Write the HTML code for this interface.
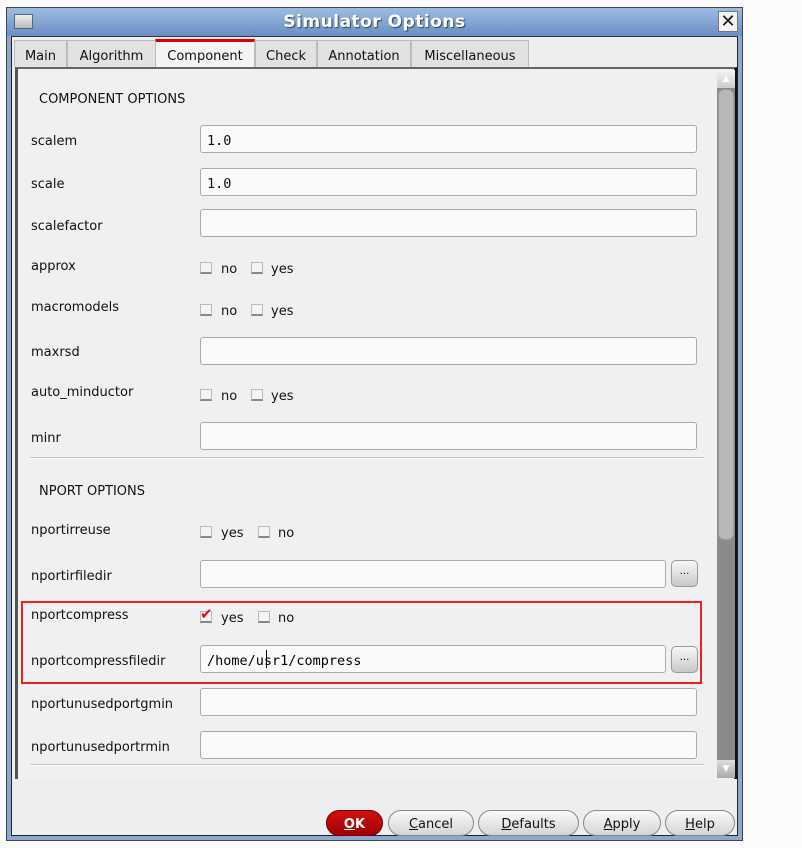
<!DOCTYPE html>
<html><head><style>
*{box-sizing:border-box;margin:0;padding:0}
body{width:802px;height:848px;background:#fbfbfb;position:relative;font-family:"DejaVu Sans","Liberation Sans",sans-serif;font-size:13px;color:#111;overflow:hidden}
.a{position:absolute}
.win{left:6px;top:7px;width:737px;height:834px;background:#8aa8d0;border:1px solid #444}
.title{left:7px;top:8px;width:735px;height:28px;background:linear-gradient(#9dbbe3,#6b8fc4)}
.body{left:11px;top:36px;width:727px;height:800px;background:#eeeeee;border:1px solid #222;border-top:1px solid #333}
.tab{top:40px;height:27px;background:#e2e2e2;border:1px solid #bbb;border-bottom:none;text-align:center;line-height:31px;font-size:13px}
.panel{left:15px;top:67px;width:722px;height:712px;background:#f0f0f0;border-left:3px solid #555;border-top:2px solid #666;border-right:3px solid #111}
.lab{left:31px;font-size:13px;margin-top:2px}
.t2{margin-top:2px}
.fld{left:200px;width:497px;height:28px;background:#fafafa;border:1px solid #aaa;border-radius:3px;font-family:"DejaVu Sans Mono","Liberation Mono",monospace;font-size:13.5px;padding-left:6px;line-height:30px}
.cb{width:12px;height:12px;border:1px solid #bbb;border-bottom:2px solid #888;background:#f4f4f4}
.ct{font-size:13px;margin-top:2px}
.sep{left:30px;width:674px;height:2px;background:#c4c4c4;border-bottom:1px solid #fff}
.dots{width:27px;height:27px;border:1px solid #999;border-radius:5px;background:linear-gradient(#f8f8f8,#c8c8c8);text-align:center;font-size:10px;line-height:22px}
.btn{top:810px;height:26px;border:1px solid #888;border-radius:13px;background:linear-gradient(#fafafa,#d4d4d4);text-align:center;line-height:27px;font-size:13px}
.btn u{text-decoration:underline}
</style></head><body>
<div class="a win"></div>
<div class="a title"></div>
<div class="a" style="left:14px;top:14px;width:19px;height:15px;background:linear-gradient(#eee,#bbb);border:1px solid #567"></div>
<div class="a" style="left:0;top:12px;width:749px;text-align:center;color:#fff;font-weight:bold;font-size:17px;text-shadow:1px 1px 1px #345;letter-spacing:0.5px">Simulator Options</div>
<div class="a" style="left:718px;top:11px;width:20px;height:21px;background:#f2f2f2;border:1px solid #777;text-align:center;font-size:18px;line-height:19px">✕</div>
<div class="a body"></div>
<div class="a tab" style="left:14px;width:53px">Main</div>
<div class="a tab" style="left:67px;width:89px">Algorithm</div>
<div class="a tab" style="left:155px;width:100px;background:#f4f4f4;border-top:3px solid #d00;top:39px;height:29px;line-height:29px">Component</div>
<div class="a tab" style="left:255px;width:62px">Check</div>
<div class="a tab" style="left:317px;width:94px">Annotation</div>
<div class="a tab" style="left:411px;width:118px">Miscellaneous</div>
<div class="a panel"></div>
<div class="a" style="left:717px;top:70px;width:18px;height:708px;background:#8a8a8a"></div>
<div class="a" style="left:717px;top:70px;width:18px;height:18px;background:linear-gradient(#f4f4f4,#ccc);text-align:center;color:#fff;font-size:9px;line-height:18px">▲</div>
<div class="a" style="left:718px;top:89px;width:16px;height:451px;background:#b8b8b8;border-radius:6px;border:1px solid #999"></div>
<div class="a" style="left:717px;top:760px;width:18px;height:18px;background:linear-gradient(#ddd,#aaa);text-align:center;color:#fff;font-size:9px;line-height:18px">▼</div>

<div class="a t2" style="left:39px;top:90px">COMPONENT OPTIONS</div>
<div class="a lab" style="top:132px">scalem</div><div class="a fld" style="top:125px">1.0</div>
<div class="a lab" style="top:175px">scale</div><div class="a fld" style="top:168px">1.0</div>
<div class="a lab" style="top:217px">scalefactor</div><div class="a fld" style="top:209px"></div>
<div class="a lab" style="top:257px">approx</div>
<div class="a cb" style="left:200px;top:262px"></div><div class="a ct" style="left:221px;top:260px">no</div>
<div class="a cb" style="left:251px;top:262px"></div><div class="a ct" style="left:271px;top:260px">yes</div>
<div class="a lab" style="top:298px">macromodels</div>
<div class="a cb" style="left:200px;top:304px"></div><div class="a ct" style="left:221px;top:302px">no</div>
<div class="a cb" style="left:251px;top:304px"></div><div class="a ct" style="left:271px;top:302px">yes</div>
<div class="a lab" style="top:343px">maxrsd</div><div class="a fld" style="top:337px"></div>
<div class="a lab" style="top:383px">auto_minductor</div>
<div class="a cb" style="left:200px;top:389px"></div><div class="a ct" style="left:221px;top:387px">no</div>
<div class="a cb" style="left:251px;top:389px"></div><div class="a ct" style="left:271px;top:387px">yes</div>
<div class="a lab" style="top:429px">minr</div><div class="a fld" style="top:422px"></div>
<div class="a sep" style="top:457px"></div>
<div class="a t2" style="left:39px;top:482px">NPORT OPTIONS</div>
<div class="a lab" style="top:521px">nportirreuse</div>
<div class="a cb" style="left:200px;top:526px"></div><div class="a ct" style="left:221px;top:524px">yes</div>
<div class="a cb" style="left:258px;top:526px"></div><div class="a ct" style="left:278px;top:524px">no</div>
<div class="a lab" style="top:567px">nportirfiledir</div><div class="a fld" style="top:560px;width:466px"></div>
<div class="a dots" style="left:671px;top:560px">...</div>
<div class="a" style="left:21px;top:601px;width:681px;height:83px;border:2px solid #e22"></div>
<div class="a lab" style="top:606px">nportcompress</div>
<div class="a cb" style="left:200px;top:611px"></div><div class="a" style="left:200px;top:605px;color:#d11;font-size:15px;font-weight:bold">✔</div><div class="a ct" style="left:221px;top:609px">yes</div>
<div class="a cb" style="left:258px;top:611px"></div><div class="a ct" style="left:278px;top:609px">no</div>
<div class="a lab" style="top:652px">nportcompressfiledir</div><div class="a fld" style="top:645px;width:466px;color:#000">/home/usr1/compress</div>
<div class="a" style="left:266px;top:650px;width:1px;height:18px;background:#000"></div>
<div class="a dots" style="left:671px;top:646px">...</div>
<div class="a lab" style="top:695px">nportunusedportgmin</div><div class="a fld" style="top:688px"></div>
<div class="a lab" style="top:738px">nportunusedportrmin</div><div class="a fld" style="top:731px"></div>
<div class="a sep" style="top:764px"></div>

<div class="a btn" style="left:326px;width:57px;background:linear-gradient(#d01010,#a00000);border-color:#700;color:#fff;font-weight:bold"><u>O</u>K</div>
<div class="a btn" style="left:388px;width:86px"><u>C</u>ancel</div>
<div class="a btn" style="left:478px;width:101px"><u>D</u>efaults</div>
<div class="a btn" style="left:583px;width:78px"><u>A</u>pply</div>
<div class="a btn" style="left:665px;width:70px"><u>H</u>elp</div>
</body></html>
